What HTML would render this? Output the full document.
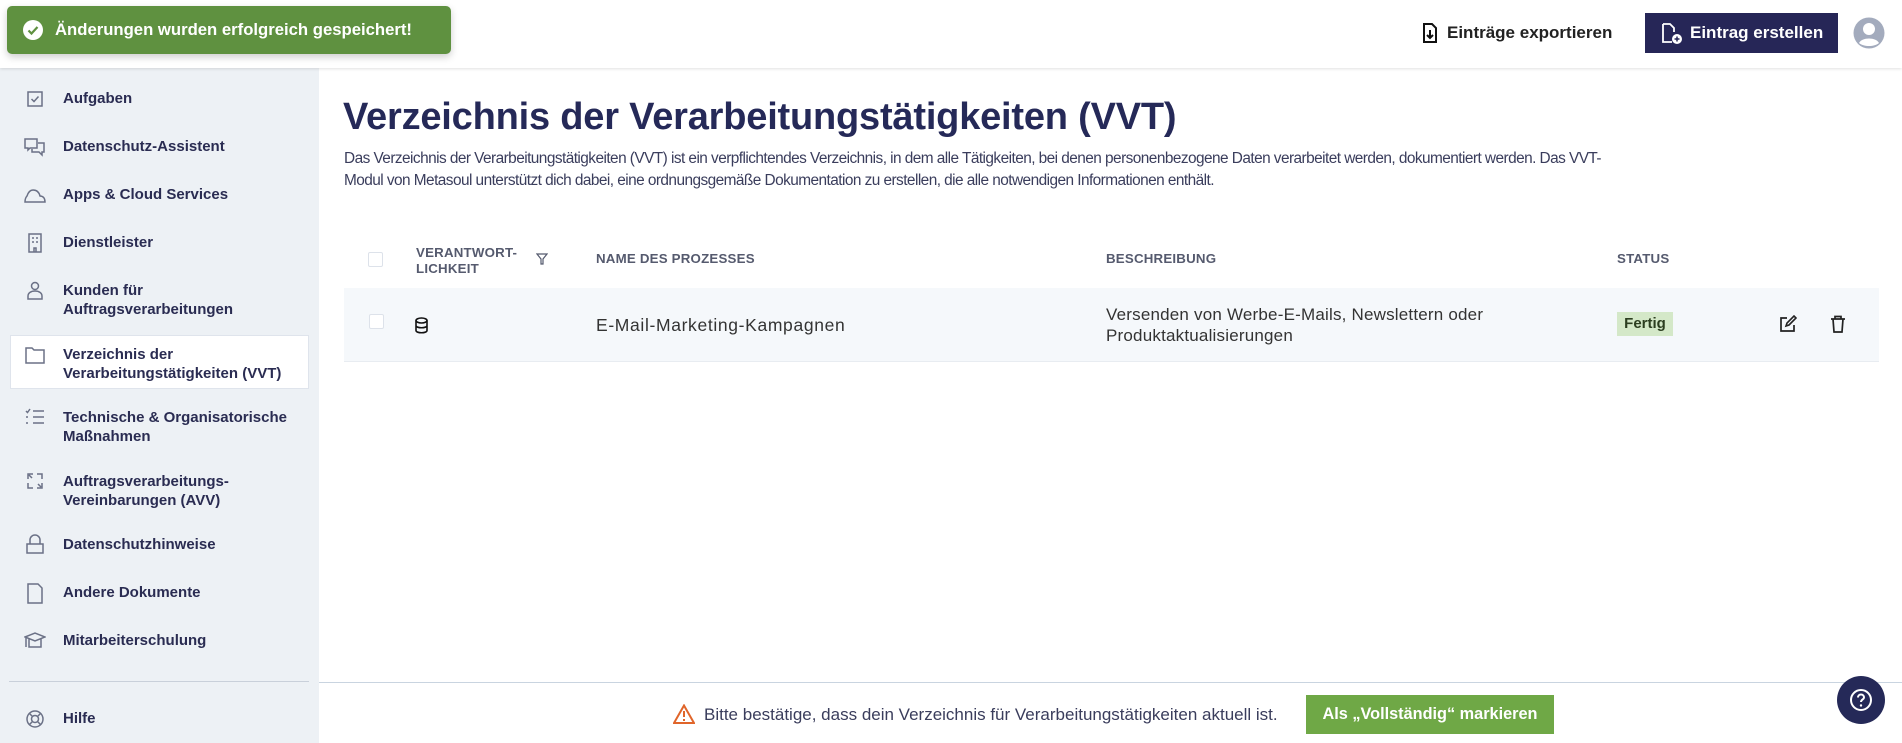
<!DOCTYPE html>
<html><head><meta charset="utf-8"><style>
*{box-sizing:border-box;margin:0;padding:0}
body{width:1902px;height:743px;overflow:hidden;background:#fff;font-family:"Liberation Sans",sans-serif;color:#252958;position:relative}
.a{position:absolute}
.top{left:0;top:0;width:1902px;height:68px;background:#fff;box-shadow:0 1px 3px rgba(0,0,0,.12);z-index:2}
.side{left:0;top:68px;width:319px;height:675px;background:#edf1f5}
.it{position:absolute;left:63px;font-size:15px;font-weight:bold;line-height:19px;color:#2a2c52}
.ic{position:absolute;left:24px;width:22px;height:22px}
.ic svg{width:22px;height:22px;fill:none;stroke:#6b7186;stroke-width:1.5}
.th{font-size:13.3px;font-weight:bold;color:#555a6e;letter-spacing:.2px}
.cb{width:15px;height:15px;border:1.5px solid #dde2ea;border-radius:2px;background:#fff}
</style></head><body>
<div class="a top"></div>
<div class="a" style="left:7px;top:6px;width:444px;height:48px;background:#5f9140;border-radius:5px;z-index:3;box-shadow:0 3px 8px rgba(0,0,0,.2)">
<svg class="a" style="left:16px;top:14px" width="20" height="20" viewBox="0 0 20 20"><circle cx="10" cy="10" r="10" fill="#fff"/><path d="M5.5 10.5l3 3 6-6.5" stroke="#5f9140" stroke-width="2.2" fill="none"/></svg>
<div class="a" style="left:48px;top:14px;font-size:16.7px;font-weight:bold;color:#fff;white-space:nowrap">Änderungen wurden erfolgreich gespeichert!</div></div>
<svg class="a" style="left:1422px;top:23px;z-index:3" width="16" height="20" viewBox="0 0 16 20"><path d="M2 1h8l4 4v14H2z" stroke="#111" stroke-width="2" fill="none"/><path d="M8 7v8M5 12l3 3 3-3" stroke="#111" stroke-width="2" fill="none"/></svg>
<div class="a" style="left:1447px;top:23px;font-size:17px;font-weight:bold;color:#222;z-index:3">Einträge exportieren</div>
<div class="a" style="left:1645px;top:13px;width:193px;height:40px;background:#262657;z-index:3">
<svg class="a" style="left:16px;top:10px" width="22" height="22" viewBox="0 0 22 22"><path d="M2 1h7l4 4v4M2 1v18h9" stroke="#fff" stroke-width="1.8" fill="none"/><circle cx="16" cy="16" r="5" fill="#fff"/><path d="M16 13.5v5M13.5 16h5" stroke="#262657" stroke-width="1.5"/></svg>
<div class="a" style="left:45px;top:10px;font-size:17px;font-weight:bold;color:#fff">Eintrag erstellen</div></div>
<svg class="a" style="left:1853px;top:16px;z-index:3" width="32" height="34" viewBox="0 0 32 34"><circle cx="16" cy="17" r="15.5" fill="#a3abbd"/><circle cx="16" cy="13" r="6" fill="#fff"/><path d="M6 27c3-6 17-6 20 0c-5 4-15 4-20 0z" fill="#fff"/></svg>

<div class="a side">
<div class="a" style="left:10px;top:267px;width:299px;height:54px;background:#fff;border:1px solid #dfe4ec"></div>
<div class="ic" style="top:20px"><svg viewBox="0 0 22 22"><rect x="4" y="4" width="14" height="14"/><path d="M7.5 11l2.5 2.5 4.5-5"/></svg></div>
<div class="it" style="top:21px">Aufgaben</div>
<div class="ic" style="top:68px"><svg viewBox="0 0 22 22"><path d="M1 3h12v9H6l-2 2v-2H1zM14 7h6v9h-2v3l-3-3h-7v-3"/></svg></div>
<div class="it" style="top:69px">Datenschutz-Assistent</div>
<div class="ic" style="top:116px"><svg viewBox="0 0 22 22"><path d="M1 18h20c0-4-2-6-5-6c-1-4-3-6-7-6c-3 0-5 3-6 6c-1 1-2 3-2 6z"/></svg></div>
<div class="it" style="top:117px">Apps &amp; Cloud Services</div>
<div class="ic" style="top:164px"><svg viewBox="0 0 22 22"><rect x="5" y="2" width="12" height="18"/><path d="M8 6h2M12 6h2M8 10h2M12 10h2M10 20v-4h2v4"/></svg></div>
<div class="it" style="top:165px">Dienstleister</div>
<div class="ic" style="top:212px"><svg viewBox="0 0 22 22"><circle cx="11" cy="6" r="3.5"/><path d="M4 19v-3c0-3 3-5 7-5s7 2 7 5v3z"/></svg></div>
<div class="it" style="top:213px">Kunden für<br>Auftragsverarbeitungen</div>
<div class="ic" style="top:276px"><svg viewBox="0 0 22 22"><path d="M2 4h6l2 2h10v13H2z"/></svg></div>
<div class="it" style="top:277px">Verzeichnis der<br>Verarbeitungstätigkeiten (VVT)</div>
<div class="ic" style="top:338px"><svg viewBox="0 0 22 22"><path d="M9 5h11M9 11h11M9 17h11M2 5l1.5 1.5L6 3M2 11h2M2 17h2"/></svg></div>
<div class="it" style="top:340px">Technische &amp; Organisatorische<br>Maßnahmen</div>
<div class="ic" style="top:402px"><svg viewBox="0 0 22 22"><path d="M4 9V4h5M18 13v5h-5M13 4h5v5M9 18H4v-5M5 5l3 3M17 17l-3-3"/></svg></div>
<div class="it" style="top:404px">Auftragsverarbeitungs-<br>Vereinbarungen (AVV)</div>
<div class="ic" style="top:466px"><svg viewBox="0 0 22 22"><rect x="3" y="10" width="16" height="9"/><path d="M6 10V6a5 5 0 0110 0v4"/></svg></div>
<div class="it" style="top:467px">Datenschutzhinweise</div>
<div class="ic" style="top:514px"><svg viewBox="0 0 22 22"><path d="M4 2h10l4 4v15H4z"/></svg></div>
<div class="it" style="top:515px">Andere Dokumente</div>
<div class="ic" style="top:562px"><svg viewBox="0 0 22 22"><path d="M1 7l10-4 10 4-10 4zM5 9v8h12V9M2 8v9"/></svg></div>
<div class="it" style="top:563px">Mitarbeiterschulung</div>
<div class="a" style="left:9px;top:613px;width:300px;height:1px;background:#c9d0da"></div>
<div class="ic" style="top:640px"><svg viewBox="0 0 22 22"><circle cx="11" cy="11" r="8"/><circle cx="11" cy="11" r="3.5"/><path d="M5 5l3.5 3.5M17 5l-3.5 3.5M5 17l3.5-3.5M17 17l-3.5-3.5"/></svg></div>
<div class="it" style="top:641px">Hilfe</div>
</div>

<div class="a" style="left:343px;top:96px;font-size:38px;font-weight:bold;color:#252958;letter-spacing:-.2px">Verzeichnis der Verarbeitungstätigkeiten (VVT)</div>
<div class="a" style="left:344px;top:148px;width:1560px;font-size:15.4px;letter-spacing:-.55px;line-height:22px;color:#3a3d5c;white-space:nowrap">Das Verzeichnis der Verarbeitungstätigkeiten (VVT) ist ein verpflichtendes Verzeichnis, in dem alle Tätigkeiten, bei denen personenbezogene Daten verarbeitet werden, dokumentiert werden. Das VVT-<br>Modul von Metasoul unterstützt dich dabei, eine ordnungsgemäße Dokumentation zu erstellen, die alle notwendigen Informationen enthält.</div>

<div class="a cb" style="left:368px;top:252px"></div>
<div class="a th" style="left:416px;top:245px;line-height:16px">VERANTWORT-<br>LICHKEIT</div>
<svg class="a" style="left:536px;top:253px" width="12" height="12" viewBox="0 0 12 12"><path d="M1 1h10L7 6v5H5V6z" stroke="#555a6e" fill="none" stroke-width="1.2"/></svg>
<div class="a th" style="left:596px;top:251px">NAME DES PROZESSES</div>
<div class="a th" style="left:1106px;top:251px">BESCHREIBUNG</div>
<div class="a th" style="left:1617px;top:251px">STATUS</div>

<div class="a" style="left:344px;top:288px;width:1535px;height:74px;background:#f5f8fb;border-bottom:1px solid #e8ecf1"></div>
<div class="a cb" style="left:369px;top:314px"></div>
<svg class="a" style="left:414px;top:317px" width="15" height="17" viewBox="0 0 15 17"><ellipse cx="7.5" cy="3.5" rx="5.5" ry="2.5" fill="none" stroke="#111" stroke-width="1.6"/><path d="M2 3.5v10c0 3 11 3 11 0v-10M2 8.5c0 3 11 3 11 0" fill="none" stroke="#111" stroke-width="1.6"/></svg>
<div class="a" style="left:596px;top:315px;font-size:17.5px;letter-spacing:.65px;color:#333">E-Mail-Marketing-Kampagnen</div>
<div class="a" style="left:1106px;top:304px;font-size:17px;letter-spacing:.2px;line-height:21px;color:#333">Versenden von Werbe-E-Mails, Newslettern oder<br>Produktaktualisierungen</div>
<div class="a" style="left:1617px;top:312px;width:56px;height:24px;background:#d4e8c8;font-size:15px;font-weight:bold;color:#2c3e20;line-height:24px;text-align:center">Fertig</div>
<svg class="a" style="left:1779px;top:315px" width="18" height="18" viewBox="0 0 18 18"><path d="M8 3H2v13h13v-6" fill="none" stroke="#222" stroke-width="1.7"/><path d="M7 11l1-3 7-7 2 2-7 7z" fill="none" stroke="#222" stroke-width="1.6"/></svg>
<svg class="a" style="left:1830px;top:315px" width="16" height="18" viewBox="0 0 16 18"><path d="M1 4h14M5 4V1.5h6V4M3 4l1 13h8l1-13" fill="none" stroke="#222" stroke-width="1.7"/></svg>

<div class="a" style="left:319px;top:682px;width:1583px;height:1px;background:#c9d4e0"></div>
<svg class="a" style="left:673px;top:704px" width="22" height="20" viewBox="0 0 22 20"><path d="M11 1.5L1 19h20z" fill="none" stroke="#e0652a" stroke-width="2"/><path d="M11 7v6M11 15v2" stroke="#e0652a" stroke-width="2"/></svg>
<div class="a" style="left:704px;top:705px;font-size:17px;color:#3a3d5c">Bitte bestätige, dass dein Verzeichnis für Verarbeitungstätigkeiten aktuell ist.</div>
<div class="a" style="left:1306px;top:695px;width:248px;height:39px;background:#6fa846;color:#fff;font-size:16.3px;font-weight:bold;line-height:39px;text-align:center">Als „Vollständig“ markieren</div>
<div class="a" style="left:1837px;top:676px;width:48px;height:48px;border-radius:50%;background:#252958"></div>
<svg class="a" style="left:1849px;top:688px" width="24" height="24" viewBox="0 0 24 24"><circle cx="12" cy="12" r="10" fill="none" stroke="#fff" stroke-width="2"/><path d="M9 9.5a3 3 0 116 0c0 2-3 2-3 4.5" fill="none" stroke="#fff" stroke-width="2"/><circle cx="12" cy="17.5" r="1.2" fill="#fff"/></svg>
</body></html>
